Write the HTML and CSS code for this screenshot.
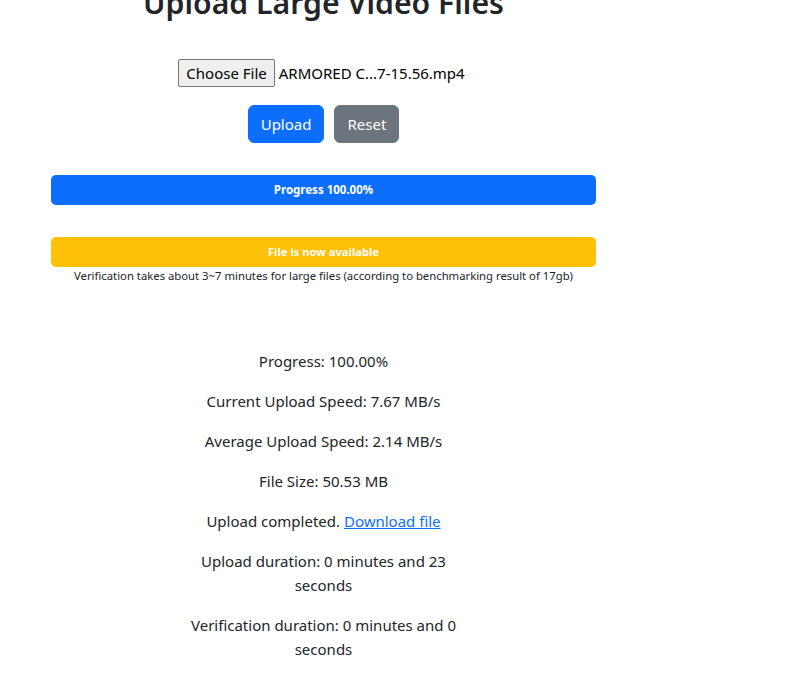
FILE: index.html
```html
<!DOCTYPE html>
<html lang="en">
<head>
<meta charset="utf-8">
<title>Upload Large Video Files</title>
<link rel="stylesheet" href="styles.css">
</head>
<body>
<main class="page">
  <h1 class="title">Upload Large Video Files</h1>
  <div class="file-row">
    <span class="file-btn">Choose File</span><span class="file-name">ARMORED C...7-15.56.mp4</span>
  </div>
  <div class="actions">
    <button class="btn btn-primary" type="button">Upload</button>
    <button class="btn btn-secondary" type="button">Reset</button>
  </div>
  <div class="bar bar-blue">Progress 100.00%</div>
  <div class="bar bar-yellow">File is now available</div>
  <p class="note">Verification takes about 3~7 minutes for large files (according to benchmarking result of 17gb)</p>
  <div class="stats">
    <p>Progress: 100.00%</p>
    <p>Current Upload Speed: 7.67 MB/s</p>
    <p>Average Upload Speed: 2.14 MB/s</p>
    <p>File Size: 50.53 MB</p>
    <p>Upload completed. <a href="#">Download file</a></p>
    <p>Upload duration: 0 minutes and 23 seconds</p>
    <p>Verification duration: 0 minutes and 0 seconds</p>
  </div>
</main>
</body>
</html>
```

FILE: styles.css
```css
html, body {
  margin: 0;
  padding: 0;
  background: #fff;
}
body {
  font-family: "Noto Sans", "Open Sans", sans-serif;
  font-size: 16px;
  line-height: 1.5;
  color: #212529;
  overflow: hidden;
}
.page {
  width: 545px;
  margin-left: 51px;
  text-align: center;
}
.title {
  font-size: 30.2px;
  font-weight: 600;
  line-height: 1.2;
  margin: -15px 0 0;
}
.file-row {
  margin-top: 38px;
  margin-right: 4px;
  display: flex;
  justify-content: center;
  align-items: center;
  height: 28px;
}
.file-btn {
  display: inline-block;
  box-sizing: border-box;
  height: 28px;
  padding: 0 7px;
  line-height: 26px;
  background: #efefef;
  border: 1px solid #767676;
  border-radius: 2px;
  color: #000;
  font-size: 15px;
}
.file-name {
  margin-left: 4px;
  font-size: 15px;
  color: #000;
}
.actions {
  margin-top: 18px;
  display: flex;
  justify-content: center;
  gap: 10px;
}
.btn {
  font-family: inherit;
  font-size: 15px;
  line-height: 24px;
  padding: 6px 12px;
  border: 1px solid transparent;
  border-radius: 6px;
  color: #fff;
}
.btn-primary { background: #0d6efd; border-color: #0d6efd; }
.btn-secondary { background: #6c757d; border-color: #6c757d; }
.bar {
  height: 30px;
  border-radius: 5px;
  color: #fff;
  font-size: 11.5px;
  font-weight: 700;
  line-height: 30px;
}
.bar-blue { background: #0d6efd; margin-top: 32px; }
.bar-yellow { background: #ffc107; margin-top: 32px; font-size: 11.2px; }
.note {
  margin: 0;
  font-size: 11.3px;
  line-height: 18px;
}
.stats {
  width: 272px;
  margin: 64px auto 0;
  font-size: 15px;
  line-height: 24px;
}
.stats p {
  margin: 0 0 16px;
}
.stats a {
  color: #0d6efd;
}
```
